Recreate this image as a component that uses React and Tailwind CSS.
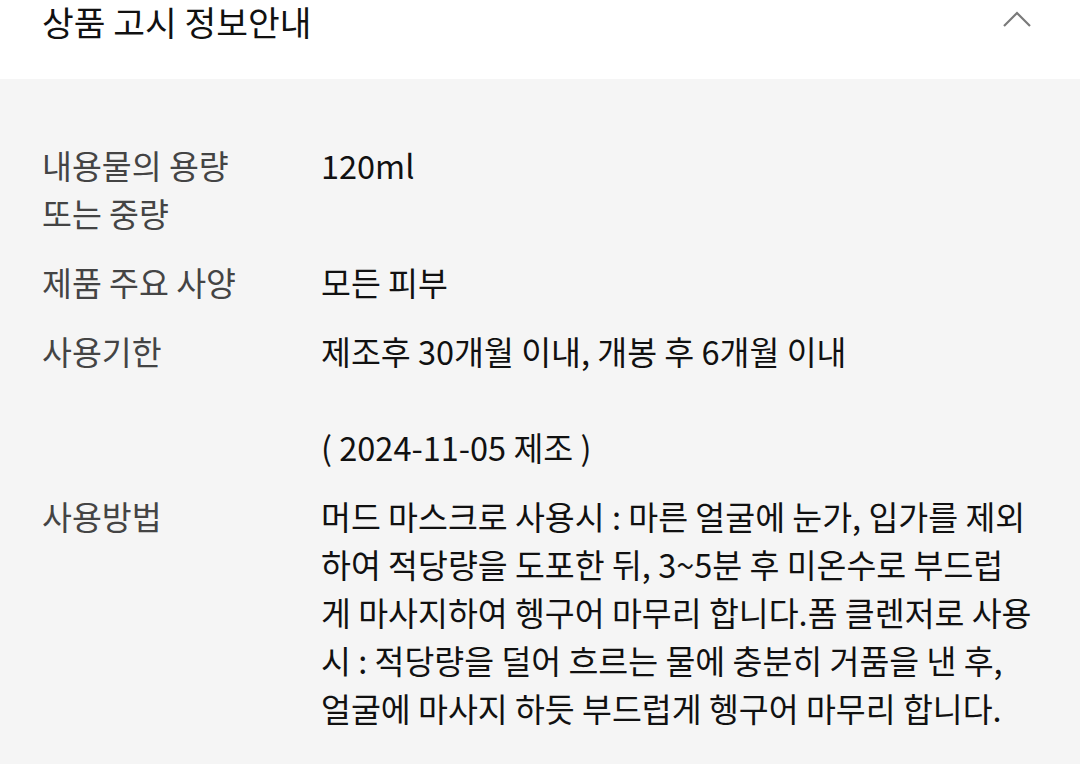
import React from 'react';

const rows = [
  { label: '내용물의 용량\n또는 중량', value: '120ml' },
  { label: '제품 주요 사양', value: '모든 피부' },
  { label: '사용기한', value: '제조후 30개월 이내, 개봉 후 6개월 이내\n\n( 2024-11-05 제조 )' },
  {
    label: '사용방법',
    value:
      '머드 마스크로 사용시 : 마른 얼굴에 눈가, 입가를 제외\n하여 적당량을 도포한 뒤, 3~5분 후 미온수로 부드럽\n게 마사지하여 헹구어 마무리 합니다.폼 클렌저로 사용\n시 : 적당량을 덜어 흐르는 물에 충분히 거품을 낸 후,\n얼굴에 마사지 하듯 부드럽게 헹구어 마무리 합니다.',
  },
];

export default function App() {
  return (
    <div className="w-[1080px] h-[764px] overflow-hidden bg-[#f5f5f5] font-['Noto_Sans_CJK_KR',sans-serif]">
      <div className="h-[79px] bg-white flex items-start justify-between px-[42px]">
        <h2 className="text-[34.5px] leading-[43px] font-normal text-[#111]">상품 고시 정보안내</h2>
        <svg width="30" height="20" viewBox="0 0 30 20" className="mt-[10px] mr-[6px]" fill="none">
          <path d="M2 16 L15 3 L28 16" stroke="#7a7a7a" strokeWidth="2.2" />
        </svg>
      </div>

      <div className="px-[42px] pt-[62px] flex flex-col gap-[21px]">
        {rows.map((row, i) => (
          <div key={i} className="flex text-[32.5px] leading-[48px]">
            <div className="w-[279px] shrink-0 whitespace-pre text-[#444]">{row.label}</div>
            <div className="flex-1 whitespace-pre text-[#111]">{row.value}</div>
          </div>
        ))}
      </div>
    </div>
  );
}
